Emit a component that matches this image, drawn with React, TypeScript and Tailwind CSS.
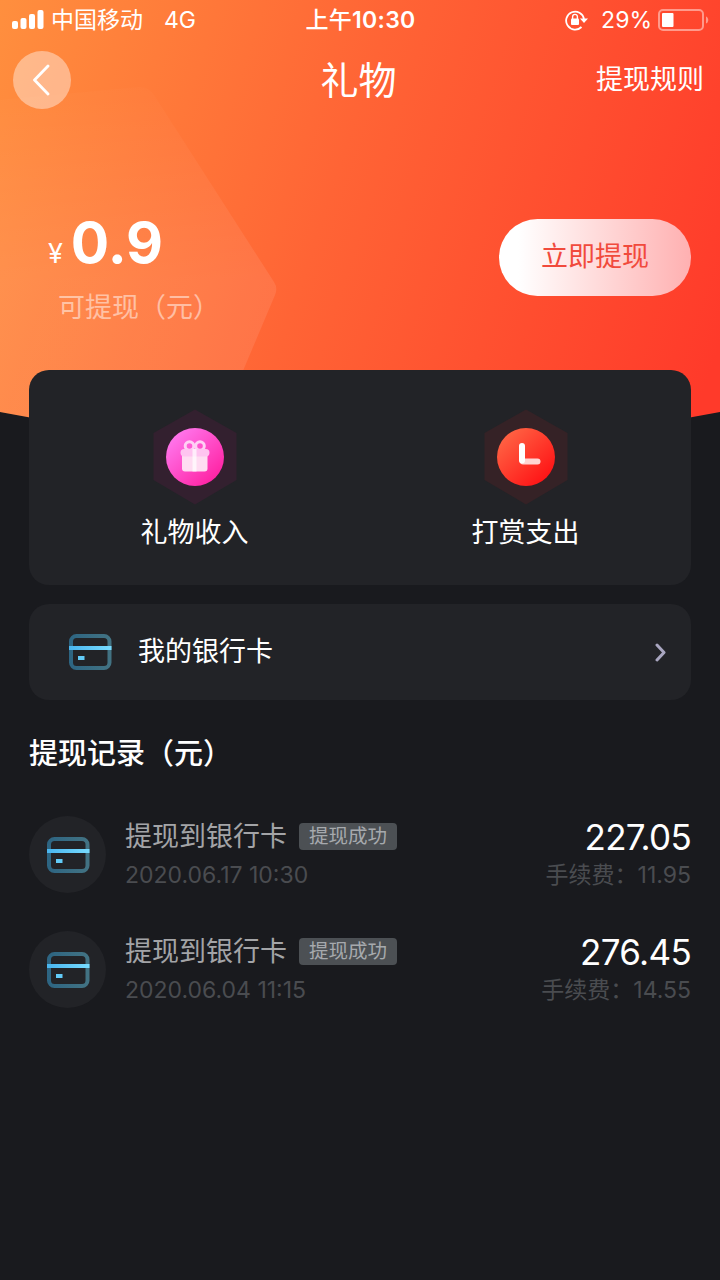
import clsx from "clsx";

const records = [
  { id: 1, title: "提现到银行卡", status: "提现成功", time: "2020.06.17 10:30", amount: "227.05", fee: "11.95" },
  { id: 2, title: "提现到银行卡", status: "提现成功", time: "2020.06.04 11:15", amount: "276.45", fee: "14.55" },
];

function CardIcon() {
  return (
    <svg width="44" height="38" viewBox="0 0 44 38" fill="none" className="shrink-0">
      <defs>
        <linearGradient id="cardFrame" x1="0" y1="0" x2="44" y2="0" gradientUnits="userSpaceOnUse">
          <stop stopColor="#2c6482" />
          <stop offset="1" stopColor="#437383" />
        </linearGradient>
        <linearGradient id="cardStripe" x1="0" y1="0" x2="44" y2="0" gradientUnits="userSpaceOnUse">
          <stop stopColor="#48b4ee" />
          <stop offset="1" stopColor="#78dcff" />
        </linearGradient>
      </defs>
      <rect x="3" y="3" width="38.5" height="32" rx="5.5" stroke="url(#cardFrame)" strokeWidth="4" />
      <rect x="1" y="13" width="42.5" height="4" fill="url(#cardStripe)" />
      <rect x="10" y="23" width="6.5" height="4" fill="#62cbf8" />
    </svg>
  );
}

function Hexagon({ color, children }: { color: string; children: React.ReactNode }) {
  return (
    <svg width="84" height="96" viewBox="0 0 84 96" fill="none">
      <defs>
        <linearGradient id="pinkDisc" x1="20" y1="25" x2="62" y2="70" gradientUnits="userSpaceOnUse">
          <stop stopColor="#ff78ee" />
          <stop offset="1" stopColor="#ff24a4" />
        </linearGradient>
        <linearGradient id="redDisc" x1="20" y1="25" x2="62" y2="70" gradientUnits="userSpaceOnUse">
          <stop stopColor="#ff6444" />
          <stop offset="1" stopColor="#ff1416" />
        </linearGradient>
      </defs>
      <path d="M42 0.5 83.5 24V71L42 95.5 0.5 71V24Z" fill={color} />
      {children}
    </svg>
  );
}

function StatusBar() {
  return (
    <div className="grid h-10 grid-cols-3 items-center pr-[11px] pl-3 text-[23px] leading-10">
      <div className="flex items-center">
        <svg width="32" height="20" viewBox="0 0 32 20" fill="#fff" className="mr-[7px]">
          <rect x="0" y="11" width="6" height="8" rx="2" />
          <rect x="8.5" y="8" width="6" height="11" rx="2" />
          <rect x="17" y="4" width="6" height="15" rx="2" />
          <rect x="25.500" y="0" width="6" height="19" rx="2" />
        </svg>
        <span className="whitespace-nowrap">中国移动</span>
        <span className="ml-[21px]">4G</span>
      </div>
      <div className="text-center font-medium tracking-[0.3px] whitespace-nowrap">
        上午<span className="font-semibold">10:30</span>
      </div>
      <div className="flex items-center justify-end">
        <svg width="24" height="22" viewBox="0 0 24 22" fill="none" className="mr-3">
          <path d="M16.500 18A9 9 0 1 1 19 10" stroke="#fff" strokeWidth="1.800" />
          <path d="M15 9.500H23L19 14Z" fill="#fff" />
          <rect x="6" y="9.500" width="8" height="6.500" rx="1" fill="#fff" />
          <path d="M7.600 10V7.800a2.400 2.400 0 0 1 4.800 0V10" stroke="#fff" strokeWidth="1.400" />
        </svg>
        <span>29%</span>
        <svg width="51" height="22" viewBox="0 0 51 22" fill="none" className="ml-[6px]">
          <rect x="1" y="1" width="44" height="20" rx="4" stroke="#fff" strokeOpacity="0.450" strokeWidth="2" />
          <rect x="4" y="4" width="11.500" height="14" rx="1" fill="#fff" />
          <path d="M48 7.500c3 1 3 6 0 7Z" fill="#fff" fillOpacity="0.450" />
        </svg>
      </div>
    </div>
  );
}

function Header() {
  return (
    <header className="relative h-[478px] bg-linear-[108deg,#ff8f3e_0%,#ff6435_45%,#ff3a2a_95%] [clip-path:polygon(0_0,100%_0,100%_412px,50%_478px,0_412px)]">
      <svg width="280" height="430" viewBox="0 0 280 430" className="absolute top-0 left-0">
        <defs>
          <linearGradient id="glow" x1="0" y1="80" x2="0" y2="280" gradientUnits="userSpaceOnUse">
            <stop stopColor="#fff" stopOpacity="0.010" />
            <stop offset="1" stopColor="#fff" stopOpacity="0.090" />
          </linearGradient>
        </defs>
        <path d="M0 100 138 87Q148 86 154 95L274 282Q278 288 275 295L218 430H0Z" fill="url(#glow)" />
      </svg>
      <div className="relative">
        <StatusBar />
        <nav className="grid h-20 grid-cols-3 items-center pr-4 pl-[13px]">
          <button type="button" className="flex size-[58px] items-center justify-center rounded-full bg-white/40">
            <svg width="18" height="32" viewBox="0 0 18 32" fill="none">
              <path d="M15 2 1.500 16 15 30" stroke="#fff" strokeWidth="2.800" strokeLinecap="round" strokeLinejoin="round" />
            </svg>
          </button>
          <h1 className="text-center text-[38px]">礼物</h1>
          <a className="text-right text-[27px]">提现规则</a>
        </nav>
        <div className="mt-24 flex items-start justify-between pr-[29px] pl-12">
          <div>
            <div className="flex items-baseline leading-[54px]">
              <span className="mr-2 text-[27px]">¥</span>
              <span className="text-[57px] font-bold">0.9</span>
            </div>
            <p className="ml-[10px] text-[27px] leading-[54px] text-white/50">可提现（元）</p>
          </div>
          <button
            type="button"
            className="mt-[3px] h-[77px] w-48 rounded-full bg-linear-to-r from-white from-10% to-[#ffb0b1] text-[27px] text-[#f14a3c]"
          >
            立即提现
          </button>
        </div>
      </div>
    </header>
  );
}

function RecordRow({ record, className }: { record: (typeof records)[number]; className?: string }) {
  return (
    <li className={clsx("flex h-[77px] items-center", className)}>
      <div className="flex size-[77px] shrink-0 items-center justify-center rounded-full bg-[#222327]">
        <CardIcon />
      </div>
      <div className="ml-[19px] flex-1">
        <div className="flex h-10 items-center">
          <span className="text-[27px] leading-10 text-[#a3a4a7]">{record.title}</span>
          <span className="ml-3 flex h-[27px] w-[98px] items-center justify-center rounded-[4px] bg-[#4c5054] text-[19.5px] text-[#a6a9ad]">
            {record.status}
          </span>
        </div>
        <p className="text-[23px] leading-9 text-[#4a4c50]">{record.time}</p>
      </div>
      <div className="text-right">
        <p className="text-[35px] leading-10 tracking-[-0.7px] text-white">{record.amount}</p>
        <p className="text-[23px] leading-9 text-[#4a4c50]">手续费：{record.fee}</p>
      </div>
    </li>
  );
}

export default function App() {
  return (
    <div className="h-[1280px] w-[720px] overflow-hidden bg-[#191a1e] font-['Inter','Noto_Sans_CJK_SC',sans-serif] text-white">
      <Header />
      <main className="relative -mt-[108px] px-[29px]">
        <section className="grid h-[215px] grid-cols-2 rounded-[20px] bg-[#222327] pt-[39px]">
          <div className="flex flex-col items-center">
            <Hexagon color="#33202f">
              <circle cx="42" cy="48" r="29" fill="url(#pinkDisc)" />
              <circle cx="36.500" cy="37" r="4.300" stroke="#ffd0f4" strokeWidth="3" />
              <circle cx="47" cy="37" r="4.300" stroke="#ffd0f4" strokeWidth="3" />
              <rect x="29" y="44" width="25.500" height="18.500" rx="3" fill="#ffdcf2" />
              <rect x="27.500" y="40" width="29" height="7.500" rx="3.700" fill="#ffc4f0" />
              <rect x="39.500" y="40" width="4" height="22.500" fill="#fff" fillOpacity="0.700" />
            </Hexagon>
            <span className="mt-2 text-[27px] leading-10">礼物收入</span>
          </div>
          <div className="flex flex-col items-center">
            <Hexagon color="#352226">
              <circle cx="42" cy="48" r="29" fill="url(#redDisc)" />
              <path d="M39 52.500H53.500" stroke="#ffd5d3" strokeWidth="6" strokeLinecap="round" />
              <path d="M38 37V51.500" stroke="#fff" strokeWidth="6" strokeLinecap="round" />
            </Hexagon>
            <span className="mt-2 text-[27px] leading-10">打赏支出</span>
          </div>
        </section>

        <section className="mt-[19px] flex h-24 items-center rounded-[20px] bg-[#222327] pr-[25px] pl-[39px]">
          <CardIcon />
          <span className="ml-[26px] flex-1 text-[27px]">我的银行卡</span>
          <svg width="11" height="19" viewBox="0 0 11 19" fill="none">
            <path d="M2 2 9 9.500 2 17" stroke="#a9a6c0" strokeWidth="3" strokeLinecap="round" strokeLinejoin="round" />
          </svg>
        </section>

        <h2 className="mt-8 text-[29px] leading-[44px] font-medium">提现记录（元）</h2>
        <ul className="mt-10">
          {records.map((record, i) => (
            <RecordRow key={record.id} record={record} className={i > 0 ? "mt-[38px]" : ""} />
          ))}
        </ul>
      </main>
    </div>
  );
}
